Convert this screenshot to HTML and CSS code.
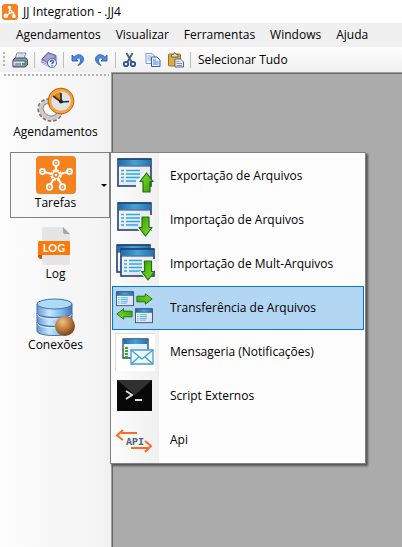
FILE: index.html
```html
<!DOCTYPE html>
<html lang="pt-BR">
<head>
<meta charset="utf-8">
<title>JJ Integration - .JJ4</title>
<link rel="stylesheet" href="styles.css">
</head>
<body>
<svg class="defs" width="0" height="0" aria-hidden="true">
  <defs>
    <linearGradient id="bar" x1="0" x2="1" y1="0" y2="0"><stop offset="0" stop-color="#1c6da8"/><stop offset=".5" stop-color="#45a5d6"/><stop offset="1" stop-color="#2374ac"/></linearGradient>
    <linearGradient id="green" x1="0" x2="1" y1="0" y2="1"><stop offset="0" stop-color="#8be02c"/><stop offset="1" stop-color="#2f9f0a"/></linearGradient>
    <linearGradient id="cyl" x1="0" x2="1" y1="0" y2="0"><stop offset="0" stop-color="#6795d2"/><stop offset=".35" stop-color="#c9e8fb"/><stop offset=".7" stop-color="#7db9ec"/><stop offset="1" stop-color="#4d70b8"/></linearGradient>
    <radialGradient id="ball" cx=".38" cy=".3" r=".75"><stop offset="0" stop-color="#f0c08a"/><stop offset=".5" stop-color="#bd7d3e"/><stop offset="1" stop-color="#6d3c14"/></radialGradient>
    <linearGradient id="paper" x1="0" x2="1" y1="0" y2="1"><stop offset="0" stop-color="#fff"/><stop offset="1" stop-color="#d6dcf2"/></linearGradient>
    <symbol id="window" viewBox="0 0 35 30">
      <rect x="1" y="1" width="33" height="27" fill="url(#paper)" stroke="#27406f" stroke-width="1.6"/>
      <rect x="1.6" y="1.6" width="31.8" height="6" fill="url(#bar)"/>
      <path d="M1 8h33M1 1.2h33" stroke="#1d3f78" stroke-width="1.2"/>
      <path d="M4 12.5h3M4 16h3M4 19.500h3M4 23h3M9 12.500h14M9 16h14M9 19.500h14M9 23h12" stroke="#2ba8e2" stroke-width="1.500"/>
    </symbol>
    <symbol id="arrow" viewBox="0 0 15 21">
      <path d="M7.500 1L14 9.500H11V20H4V9.500H1z" fill="url(#green)" stroke="#21700d" stroke-width="1.200" stroke-linejoin="round"/>
    </symbol>
  </defs>
</svg>
<div class="app">
  <header class="titlebar">
    <svg width="16" height="16" viewBox="0 0 16 16" aria-hidden="true"><rect width="16" height="16" rx="3" fill="#f5821f"/><path d="M8 4v5L4 12M8 8.500h3.500V12" stroke="#fff" stroke-width="1.500" fill="none"/><circle cx="7.500" cy="3.500" r="1.700" fill="#fff"/><circle cx="3.800" cy="11.800" r="2.200" fill="#fff"/><circle cx="12" cy="12.200" r="1.900" fill="#fff"/><circle cx="8.500" cy="7.500" r="2" fill="#fff"/><circle cx="8.500" cy="7.500" r=".8" fill="#f5821f"/></svg>
    <h1 class="title">JJ Integration - .JJ4</h1>
  </header>
  <nav class="menubar">
    <button type="button">Agendamentos</button>
    <button type="button">Visualizar</button>
    <button type="button">Ferramentas</button>
    <button type="button">Windows</button>
    <button type="button">Ajuda</button>
  </nav>
  <div class="toolbar" role="toolbar">
    <span class="grip"></span>
    <button type="button" class="tool" aria-label="Imprimir"><svg width="16" height="16" viewBox="0 0 16 16"><path d="M5 1h9l-2.500 6H3z" fill="#f4f7fb" stroke="#71839b"/><path d="M6 3h6M5.500 5h6" stroke="#b4c4d8"/><path d="M1 8l2-2h11l1.500 2v5L13 15H1z" fill="#8795a8" stroke="#44536b"/><path d="M1 9h12v5H1z" fill="#dce4ed" stroke="#59697d"/><path d="M3 12h6" stroke="#4b596c"/><path d="M10 12h3" stroke="#26c526" stroke-width="2"/></svg></button>
    <span class="sep"></span>
    <button type="button" class="tool" aria-label="Ajuda"><svg width="16" height="16" viewBox="0 0 16 16"><path d="M1 7l6-6.500 8 3v5L9 15 1 11z" fill="#8583ba" stroke="#62609b"/><path d="M1 9l7 3.500 6-6M1 11l7 3" stroke="#e3e2f2" fill="none"/><path d="M2 7l5.500-5.500L14 4 8 10z" fill="#a7a5d0"/><circle cx="11" cy="11" r="4.500" fill="#eaf2fd" stroke="#3e66ad"/><path d="M9.500 10c0-2 3-2 3-.3 0 1.300-1.500 1-1.500 2.300M11 13v1" stroke="#2455a6" stroke-width="1.300" fill="none"/></svg></button>
    <span class="sep"></span>
    <button type="button" class="tool" aria-label="Desfazer"><svg width="16" height="16" viewBox="0 0 16 16"><path d="M2 3v6h6L6 7c2-2 5-1 4.500 2-.2 1.500-1.300 3-2.500 4.500 3-1 5.500-3.500 5.500-6.500C13.500 2.500 7.500 1 4.200 5z" fill="#4b8de0" stroke="#2257ad" stroke-width=".8"/></svg></button>
    <button type="button" class="tool" aria-label="Refazer"><svg width="16" height="16" viewBox="0 0 16 16"><path d="M14 3v6H8l2-2C8 5 5 6 5.500 9c.2 1.500 1.300 3 2.500 4.500C5 12.500 2.500 10 2.500 7 2.500 2.500 8.500 1 11.800 5z" fill="#4b8de0" stroke="#2257ad" stroke-width=".8"/></svg></button>
    <span class="sep"></span>
    <button type="button" class="tool" aria-label="Recortar"><svg width="16" height="16" viewBox="0 0 16 16"><path d="M4.500 1l5 9M10.500 1l-5 9" stroke="#53657d" stroke-width="2"/><circle cx="4" cy="12" r="2.200" fill="none" stroke="#264f9c" stroke-width="1.800"/><circle cx="11" cy="12" r="2.200" fill="none" stroke="#264f9c" stroke-width="1.800"/></svg></button>
    <button type="button" class="tool" aria-label="Copiar"><svg width="16" height="16" viewBox="0 0 16 16"><path d="M1 1.500h6l3 3v7H1z" fill="#f3f7fe" stroke="#7e9acb"/><path d="M2.500 4h4M2.500 6h5M2.500 8h4" stroke="#86a6de"/><path d="M6.500 5h5.500l3 3v6.500H6.500z" fill="#e4eefe" stroke="#3561ad"/><path d="M8 8h3M8 10h5.500M8 12h5.500" stroke="#5384cf"/></svg></button>
    <button type="button" class="tool" aria-label="Colar"><svg width="16" height="16" viewBox="0 0 16 16"><rect x=".5" y="2" width="12" height="12" rx="1" fill="#e3ab35" stroke="#98702c"/><path d="M3.500 5V2.500h2L6.500.5l1.500 2h2V5z" fill="#e8dfc9" stroke="#73674f"/><path d="M7 7h5.500L15.500 10v5H7z" fill="#e7edf7" stroke="#566884"/><path d="M8.500 9.500h3M8.500 11.500H14M8.500 13.500H14" stroke="#8196b6"/></svg></button>
    <span class="sep"></span>
    <button type="button" class="tool-text">Selecionar Tudo</button>
  </div>
  <div class="workspace">
    <aside class="sidebar">
      <span class="side-grip"></span>
      <button type="button" class="side-item">
        <svg width="40" height="40" viewBox="0 0 40 40" aria-hidden="true"><ellipse cx="14" cy="26" rx="10" ry="8.500" transform="rotate(28 14 26)" fill="none" stroke="#77706f" stroke-width="6" stroke-dasharray="3 1.500"/><ellipse cx="14" cy="26" rx="9.500" ry="8" transform="rotate(28 14 26)" fill="none" stroke="#cfc9c8" stroke-width="4"/><ellipse cx="14" cy="25.500" rx="7.500" ry="6" transform="rotate(28 14 26)" fill="none" stroke="#9a9493" stroke-width="1"/><circle cx="25" cy="17" r="12.500" fill="#e3e6e6" stroke="#bd6212" stroke-width="1.500"/><circle cx="25" cy="17" r="11" fill="#dfe3e3" stroke="#f6a33c" stroke-width="2.500"/><path d="M25 17V8a9 9 0 0 0-7.500 4z" fill="#f07d0c"/><path d="M17 12l8 6 8-.5M25 9v9" stroke="#27282b" stroke-width="1.700" fill="none"/><circle cx="25" cy="17.500" r="2" fill="#222"/></svg>
        <span>Agendamentos</span>
      </button>
      <div class="side-drop">
        <button type="button" class="side-item open" aria-haspopup="menu" aria-expanded="true">
          <svg width="40" height="40" viewBox="0 0 40 40" aria-hidden="true"><rect y="1" width="40" height="38" rx="4" fill="#f5821f"/><path d="M20 20V8M20 20L6 16.500M20 20l14-3.500M20 20l-7 12M20 20l7 12" stroke="#fff" stroke-width="2.200"/><g fill="#f5821f" stroke="#fff" stroke-width="1.800"><circle cx="20" cy="8" r="2.800"/><circle cx="6.500" cy="16.500" r="2.500"/><circle cx="33.500" cy="16.500" r="2.500"/><circle cx="13.500" cy="32" r="2.800"/><circle cx="26.500" cy="32" r="2.800"/></g><circle cx="20" cy="20" r="4.500" fill="#f5821f" stroke="#fff" stroke-width="2.500" stroke-dasharray="2.500 1"/><circle cx="20" cy="20" r="3.500" fill="#f5821f" stroke="#fff"/><circle cx="20" cy="20" r="1.300" fill="#fff"/><path d="M5.500 16.500h2M32.500 16.500h2M12.500 32h2M25.500 32h2M19 8h2" stroke="#fff"/></svg>
          <span>Tarefas</span>
          <i class="caret"></i>
        </button>
        <div class="popup" role="menu">
          <button type="button" role="menuitem" class="entry">
            <svg width="40" height="40" viewBox="0 0 40 40" aria-hidden="true"><use href="#window" x="2" y="2" width="35" height="30"/><path d="M31 13l-8 11h-2v9h10z" fill="#f5f5f5"/><use href="#arrow" x="24" y="16" width="15" height="21"/></svg>
            <span>Exportação de Arquivos</span>
          </button>
          <button type="button" role="menuitem" class="entry">
            <svg width="40" height="40" viewBox="0 0 40 40" aria-hidden="true"><use href="#window" x="2" y="2" width="35" height="30"/><path d="M25 15h13v11h1l-8 12-10-11h4z" fill="#f5f5f5"/><g transform="rotate(180 30 27)"><use href="#arrow" x="22" y="17" width="15" height="21"/></g></svg>
            <span>Importação de Arquivos</span>
          </button>
          <button type="button" role="menuitem" class="entry">
            <svg width="40" height="40" viewBox="0 0 40 40" aria-hidden="true"><use href="#window" x="1" y="0" width="35" height="30"/><use href="#window" x="5" y="4" width="35" height="30"/><path d="M27 15h13v11l-7 12-9-11h3z" fill="#f5f5f5"/><g transform="rotate(180 33 27)"><use href="#arrow" x="25.500" y="17" width="15" height="21"/></g></svg>
            <span>Importação de Mult-Arquivos</span>
          </button>
          <button type="button" role="menuitem" class="entry selected">
            <svg width="40" height="40" viewBox="0 0 40 40" aria-hidden="true"><use href="#window" x="1" y="3" width="18" height="16"/><use href="#window" x="20" y="20" width="18" height="16"/><g transform="translate(38 5) rotate(90)"><use href="#arrow" x="0" y="0" width="12" height="17"/></g><g transform="translate(1 32) rotate(-90)"><use href="#arrow" x="0" y="0" width="12" height="17"/></g></svg>
            <span>Transferência de Arquivos</span>
          </button>
          <button type="button" role="menuitem" class="entry">
            <svg width="40" height="40" viewBox="0 0 40 40" aria-hidden="true"><rect width="40" height="38" y="1" fill="#fff"/><path d="M.5 39V1.500H40" fill="none" stroke="#ddd"/><path d="M8 7h25v19H8z" fill="#eaf1fb" stroke="#27406f" stroke-width="1.300"/><path d="M8.500 7.500h24V12h-24z" fill="url(#bar)"/><path d="M10 16h3M10 19h3M10 22h3M10 25h3" stroke="#46a323" stroke-width="2"/><path d="M16 18h22v14H16z" fill="#edf8fe" stroke="#3f9fcd" stroke-width="1.300"/><path d="M16 18l11 9 11-9M16 32l8-7M38 32l-8-7" fill="none" stroke="#3f9fcd" stroke-width="1.300"/></svg>
            <span>Mensageria (Notificações)</span>
          </button>
          <button type="button" role="menuitem" class="entry">
            <svg width="40" height="40" viewBox="0 0 40 40" aria-hidden="true"><rect x="2" y="4" width="35" height="31" fill="#080808"/><path d="M2 4h35L20 19z" fill="#303030"/><path d="M11 15l6 4-6 4" fill="none" stroke="#ddd" stroke-width="2"/><path d="M20 24h7" stroke="#ddd" stroke-width="2"/></svg>
            <span>Script Externos</span>
          </button>
          <button type="button" role="menuitem" class="entry">
            <svg width="40" height="40" viewBox="0 0 40 40" aria-hidden="true"><path d="M22 13H6M8 10l-6 5.500L8 20M16 28h17M30 21l6 5-6 6" fill="none" stroke="#fa6b26" stroke-width="2"/><text x="20" y="25" class="api-text">API</text></svg>
            <span>Api</span>
          </button>
        </div>
      </div>
      <button type="button" class="side-item">
        <svg width="40" height="40" viewBox="0 0 40 40" aria-hidden="true"><path d="M9 1h18l7 7v28q0 3-3 3H9q-3 0-3-3V4q0-3 3-3z" fill="#e5e5e7"/><path d="M27 1l7 7h-5q-2 0-2-2z" fill="#a5a5a7"/><path d="M2 28h4v5q-4 0-4-3z" fill="#cc5500"/><path d="M3 15h31v14H2V16z" fill="#ff780a"/><text x="18" y="26" class="log-text">LOG</text></svg>
        <span>Log</span>
      </button>
      <button type="button" class="side-item">
        <svg width="40" height="40" viewBox="0 0 40 40" aria-hidden="true"><path d="M1 7v27c0 6 35 6 35 0V7z" fill="url(#cyl)" stroke="#426fac"/><path d="M1 16c0 6 35 6 35 0M1 25c0 6 35 6 35 0" fill="none" stroke="#4774b7" stroke-width="1.200"/><path d="M1.500 17.500c1 6 33 6 34 0M1.500 26.500c1 6 33 6 34 0" fill="none" stroke="#d9f1ff"/><ellipse cx="18.500" cy="7" rx="17.500" ry="5" fill="#abdcf4" stroke="#3d6eae"/><circle cx="29" cy="29" r="10" fill="url(#ball)"/></svg>
        <span>Conexões</span>
      </button>
    </aside>
    <main class="canvas"></main>
  </div>
</div>
</body>
</html>
```

FILE: styles.css
```css
* { box-sizing: border-box; }

body {
  margin: 0;
  background: #fff;
  color: #000;
  font: 12px/16px "Open Sans", "Noto Sans", sans-serif;
}

button {
  margin: 0;
  padding: 0;
  border: 0;
  background: none;
  color: inherit;
  font: inherit;
  white-space: nowrap;
}

svg { display: block; }
.defs { position: absolute; }

.app {
  display: flex;
  flex-direction: column;
  min-height: 100vh;
}

.titlebar {
  display: flex;
  align-items: center;
  gap: 5px;
  height: 23px;
  padding-left: 2px;
}

.title {
  margin: 0;
  font-size: 12px;
  font-weight: 400;
}

.menubar {
  display: flex;
  align-items: center;
  gap: 15px;
  height: 24px;
  padding-left: 16px;
  background: #f0f0f0;
}

.toolbar {
  display: flex;
  align-items: center;
  height: 25px;
  padding-left: 3px;
  background: linear-gradient(#fdfdfd, #f0f0f0);
}

.grip {
  width: 2px;
  height: 16px;
  margin-right: 3px;
  background: repeating-linear-gradient(#b4b4b4 0 2px, transparent 2px 4px);
}

.tool {
  display: grid;
  place-items: center;
  width: 23px;
  height: 23px;
}

.sep {
  width: 1px;
  height: 16px;
  margin: 0 2px 0 3px;
  background: #bdbdbd;
}

.tool-text { padding: 0 5px; }

.workspace {
  display: flex;
  flex: 1;
}

.sidebar {
  display: flex;
  flex-direction: column;
  gap: 5px;
  flex: none;
  width: 111px;
  padding: 2px 1px 8px 10px;
  background: linear-gradient(90deg, #fdfdfd, #f7f7f7 50%, #f5f5f5 85%, #f0f0f0);
}

.side-grip {
  height: 2px;
  margin: 0 1px 0 -6px;
  background: repeating-linear-gradient(90deg, #b4b4b4 0 2px, transparent 2px 4px);
}

.side-item {
  display: flex;
  flex-direction: column;
  align-items: center;
  position: relative;
  width: 100%;
  height: 66px;
  padding: 2px 9px 0 0;
  border: 1px solid transparent;
}

.side-item.open {
  border-color: #808080;
  background: linear-gradient(90deg, #fafafa, #f3f3f3);
}

.side-drop { position: relative; }

.caret {
  position: absolute;
  top: 31px;
  right: 2px;
  border: 3px solid transparent;
  border-top-color: #000;
  border-bottom: 0;
}

.popup {
  position: absolute;
  z-index: 1;
  top: 0;
  left: 100%;
  width: 256px;
  padding: 1px;
  border: 1px solid #808080;
  background: linear-gradient(90deg, #fcfcfc, #f0f0f0 48px, #fdfdfd 48px);
  box-shadow: 2px 2px 2px #555;
}

.entry {
  display: flex;
  align-items: center;
  gap: 15px;
  width: 100%;
  height: 44px;
  padding-left: 2px;
  border: 1px solid transparent;
  text-align: left;
}

.entry.selected {
  border-color: #0078d7;
  background: #b3d7f3;
}

.canvas {
  flex: 1;
  border-top: 1px solid #a0a0a0;
  border-left: 1px solid #a0a0a0;
  background: #ababab;
  box-shadow: inset 1px 1px #696969;
}

.api-text {
  fill: #4b6378;
  font: 700 10px "Liberation Mono", monospace;
  text-anchor: middle;
}

.log-text {
  fill: #fff;
  font: 700 11px Lato, sans-serif;
  text-anchor: middle;
}
```
